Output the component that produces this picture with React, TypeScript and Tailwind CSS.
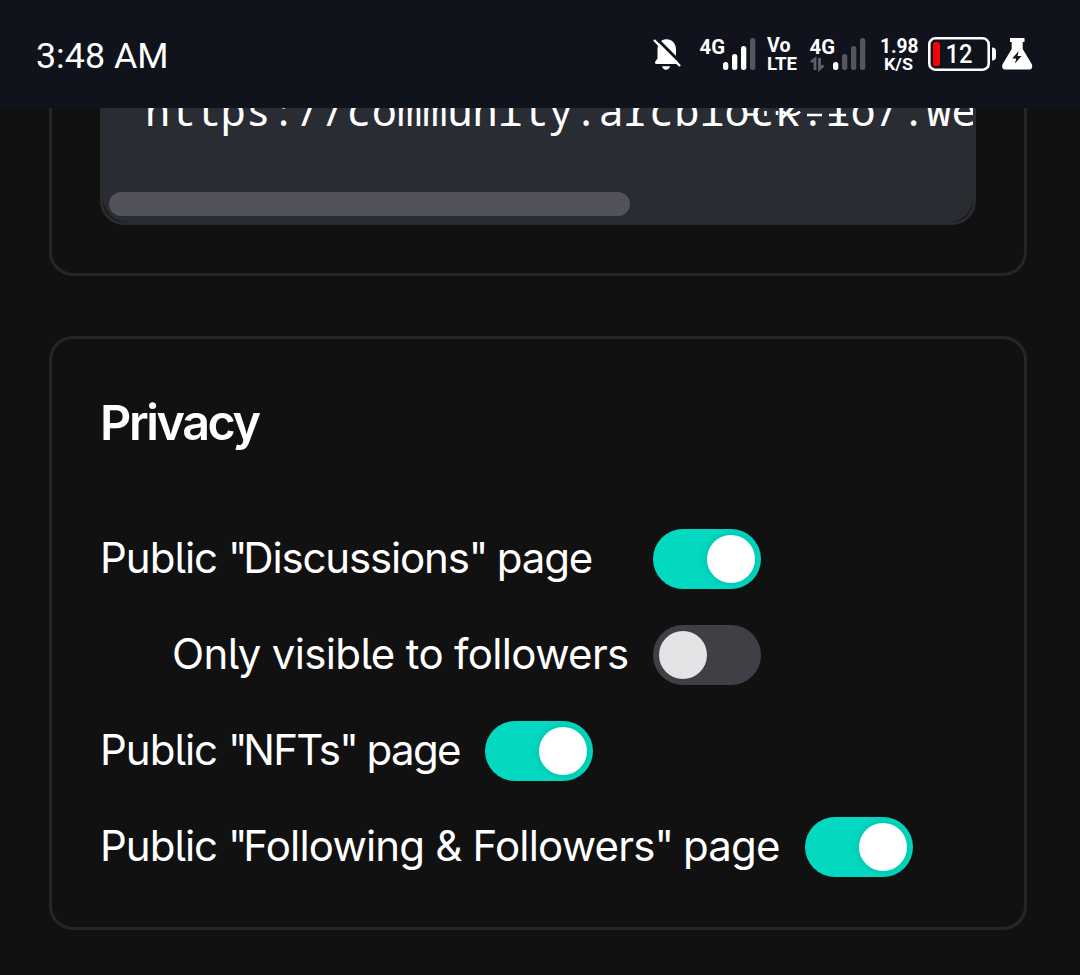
import React from "react";

function Switch({ on }: { on: boolean }) {
  return (
    <span
      role="switch"
      aria-checked={on}
      className={
        on
          ? "flex h-[60px] w-[108px] shrink-0 items-center justify-end rounded-full bg-[#03d8c1] p-[6px]"
          : "flex h-[60px] w-[108px] shrink-0 items-center justify-start rounded-full bg-[#3f4046] p-[6px]"
      }
    >
      <span
        className={
          on
            ? "size-[48px] rounded-full bg-white shadow-[0_0_9px_rgba(0,0,0,0.15)]"
            : "size-[48px] rounded-full bg-[#e4e4e7]"
        }
      />
    </span>
  );
}

function StatusBar() {
  return (
    <header className="relative z-10 flex h-[108px] shrink-0 items-start justify-between bg-[#10131c] pl-[36px] text-white">
      <div className="pt-[35px] font-['Roboto',sans-serif] text-[35.8px] leading-[43px]">3:48 AM</div>
      <svg className="h-[108px] w-[440px]" viewBox="640 0 440 108" fill="#fff" fontFamily="Roboto, sans-serif">
        <path d="M656.500 64c-1.500 0-2-1.500-1-2.800l2-2.700V50c0-6 3-10.200 8.500-10.700 6-.3 10 4.200 10 10.200V58.500l2.200 3v2.500z" />
        <path d="M662 66.200h8c-.5 2.300-2 3.500-4 3.500s-3.500-1.200-4-3.500z" />
        <path d="M656.500 38.500l25 25" stroke="#10131c" strokeWidth="3" />
        <path d="M654 40l26 26" stroke="#fff" strokeWidth="2.400" />

        <text x="699.500" y="53.500" fontSize="21" fontWeight="700" textLength="25.500" lengthAdjust="spacingAndGlyphs">4G</text>
        <rect x="723" y="62" width="5.300" height="8" rx="2.500" />
        <rect x="732" y="54" width="5.300" height="16" rx="2.500" />
        <rect x="741" y="46" width="5.300" height="24" rx="2.500" />
        <rect x="750" y="38" width="5.300" height="32" rx="2.500" fill="#54565e" />

        <text x="767" y="52.300" fontSize="19.500" fontWeight="700" textLength="23.500" lengthAdjust="spacingAndGlyphs">Vo</text>
        <text x="767" y="70" fontSize="19" fontWeight="700" textLength="30" lengthAdjust="spacingAndGlyphs">LTE</text>

        <text x="809.500" y="53.500" fontSize="21" fontWeight="700" textLength="25.500" lengthAdjust="spacingAndGlyphs">4G</text>
        <path d="M811 62l4-3v11M819.500 58v11l4-3.500" fill="none" stroke="#60626a" strokeWidth="2.800" />
        <rect x="833" y="62" width="5.300" height="8" rx="2.500" />
        <rect x="842" y="54" width="5.300" height="16" rx="2.500" fill="#54565e" />
        <rect x="851" y="46" width="5.300" height="24" rx="2.500" fill="#54565e" />
        <rect x="860" y="38" width="5.300" height="32" rx="2.500" fill="#54565e" />

        <text x="880" y="52.600" fontSize="20" fontWeight="700" textLength="38.500" lengthAdjust="spacingAndGlyphs">1.98</text>
        <text x="884" y="70" fontSize="17" fontWeight="700" textLength="29" lengthAdjust="spacingAndGlyphs">K/S</text>

        <rect x="929.300" y="38.300" width="59.400" height="31.400" rx="6" fill="none" stroke="#fff" strokeWidth="2.600" />
        <rect x="933" y="42" width="7" height="24" rx="2.500" fill="#f30505" />
        <text x="945.500" y="63" fontSize="25" fontWeight="500" textLength="27" lengthAdjust="spacingAndGlyphs">12</text>
        <path d="M992 47.500c3 0 4 1.500 4 4v5c0 2.500-1 4-4 4z" />

        <path d="M1010 38h14.500v4h-1.800v7l9 15c1.300 3 .3 5.500-3 5.500h-23c-3.300 0-4.300-2.500-3-5.500l9-15v-7h-1.700z" />
        <path d="M1018.700 51l-6.500 7.500h4l-1.200 5 6.500-7.500h-4z" fill="#10131c" />
      </svg>
    </header>
  );
}

const labelClass = "-mt-[2px] shrink-0 text-[42px] leading-[60px] whitespace-pre";
const tailed = "[font-feature-settings:'cv05']";

function PublicWord() {
  return (
    <>
      <span className={tailed + " tracking-[-1px]"}>Public </span>
      <span className="tracking-[-4.2px]">"</span>
    </>
  );
}

function ClosingQuote() {
  return <span className="tracking-[-2.2px]">"</span>;
}

export default function App() {
  return (
    <div className="flex h-[975px] w-[1080px] flex-col overflow-hidden bg-[#111111] font-['Inter',sans-serif] text-white">
      <StatusBar />
      <main className="flex w-[1076px] flex-col px-[49px]">
        <section className="-mt-[30px] h-[198px] rounded-[24px] border-[3px] border-[#262626] px-[48px]">
          <div className="relative h-[144px] overflow-hidden rounded-[24px] border-[3px] border-[#2b2b2c] bg-[#16171a]">
            <div className="h-full overflow-hidden rounded-[24px] bg-[#2a2c34] pl-[42px] font-['Noto_Sans_Mono','Liberation_Mono',monospace] text-[42px] leading-[60px] whitespace-nowrap">
              <div className="-mt-[4px]">https://community.arcblock.io/.we</div>
            </div>
            <svg
              className="absolute top-[27px] left-[642px] h-[10px] w-[106px]"
              viewBox="745 108 106 10"
              fill="none"
              stroke="#fff"
              strokeWidth="2.500"
            >
              <path d="M747 111.500h11M765.500 108v5M777 108v4M783 108l3 4M789 111.500c4 1 8 0 11-3M807 112h15M829 112h17" />
            </svg>
            <div className="absolute bottom-[6px] left-[6px] h-[24px] w-[521px] rounded-full bg-[#52525b]" />
          </div>
        </section>

        <section className="mt-[60px] h-[594px] rounded-[24px] border-[3px] border-[#262626] px-[49px] pt-[54px]">
          <h2 className="-ml-px text-[48.5px] leading-[60px] font-semibold tracking-[-2.4px]">Privacy</h2>
          <div className="mt-[76px] flex flex-col gap-[36px]">
            <div className="flex h-[60px] items-center">
              <span className={labelClass + " -ml-px w-[553px] tracking-[-1.15px]"}>
                <PublicWord />
                Discussions
                <ClosingQuote /> page
              </span>
              <Switch on />
            </div>
            <div className="flex h-[60px] items-center pl-[71px]">
              <span className={labelClass + " w-[481px] tracking-[-0.65px]"}>
                <span className={tailed}>Only visible </span>
                to followers
              </span>
              <Switch on={false} />
            </div>
            <div className="flex h-[60px] items-center">
              <span className={labelClass + " -ml-px w-[385px] tracking-[-1.7px]"}>
                <PublicWord />
                NFTs
                <ClosingQuote /> page
              </span>
              <Switch on />
            </div>
            <div className="flex h-[60px] items-center">
              <span className={labelClass + " -ml-px w-[705px] tracking-[-0.8px]"}>
                <PublicWord />
                Following &amp; Followers
                <ClosingQuote /> page
              </span>
              <Switch on />
            </div>
          </div>
        </section>
      </main>
    </div>
  );
}
